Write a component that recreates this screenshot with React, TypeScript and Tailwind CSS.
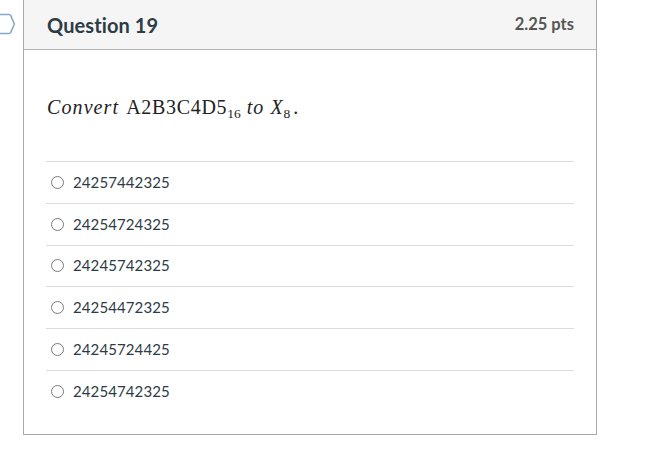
import React from 'react';

const answers = [
  '24257442325',
  '24254724325',
  '24245742325',
  '24254472325',
  '24245724425',
  '24254742325',
];

const FlagMarker: React.FC = () => (
  <svg
    className="absolute left-0 top-[13px]"
    width="16"
    height="22"
    viewBox="0 0 16 22"
    fill="none"
  >
    <path
      d="M-6 1.5 H9 Q10 1.5 10.6 2.4 L14 10 Q14.4 11 14 12 L10.6 19.6 Q10 20.5 9 20.5 H-6"
      stroke="#8aa9c6"
      strokeWidth="1.6"
      strokeLinejoin="round"
    />
  </svg>
);

const AnswerRow: React.FC<{ label: string }> = ({ label }) => (
  <div className="flex h-[41.8px] items-center border-t border-[#dcdcdc] pl-[5px]">
    <span className="h-[13px] w-[13px] shrink-0 rounded-full border border-[#7a7a7a] bg-white" />
    <span className="ml-[9px] text-[15px] leading-none tracking-[0.1px] text-[#2d3b45]">{label}</span>
  </div>
);

export default function App() {
  return (
    <div className="relative h-[451px] w-[657px] bg-white font-['Lato','Noto_Sans',sans-serif]">
      <FlagMarker />
      <div className="ml-[23px] w-[574px] border-x border-b border-[#a8a8a8] bg-white">
        <div className="flex h-[50px] items-center justify-between border-b border-[#b4b4b4] bg-[#f5f5f5] pl-[23px] pr-[22px]">
          <span className="text-[20px] font-bold tracking-[0.1px] text-[#2d3b45]">Question 19</span>
          <span className="text-[16.5px] font-bold text-[#555555]">2.25 pts</span>
        </div>
        <div className="px-[22px] pb-[22px]">
          {/* math line: Convert A2B3C4D5 (base 16) to X (base 8) */}
          <p className="mt-[45px] mb-[42px] h-[24px] pl-px font-['Liberation_Serif','DejaVu_Serif',serif] text-[20px] leading-[24px] text-[#222]">
            <i className="tracking-[1.1px]">Convert</i>{' '}
            <span className="ml-[2px] tracking-[0.7px]">A2B3C4D5</span>
            <span className="align-[-4px] text-[13.5px] leading-none">16</span>
            <i className="ml-[6px] tracking-[1px]">to</i>
            <i className="ml-[6px]">X</i>
            <span className="ml-[1px] align-[-4px] text-[13.5px] leading-none">8</span>
            <span className="ml-[3px]">.</span>
          </p>
          {answers.map((a) => (
            <AnswerRow key={a} label={a} />
          ))}
        </div>
      </div>
    </div>
  );
}
